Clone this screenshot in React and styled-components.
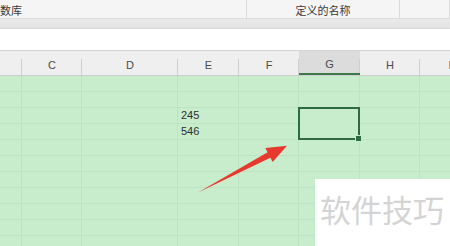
import styled, { createGlobalStyle } from "styled-components";

const GlobalStyle = createGlobalStyle`
  body {
    margin: 0;
    font-family: "Liberation Sans", "Noto Sans CJK SC", sans-serif;
  }
`;

const columns = [
  { id: "B", width: 22 },
  { id: "C", width: 60 },
  { id: "D", width: 96 },
  { id: "E", width: 61 },
  { id: "F", width: 60 },
  { id: "G", width: 61, active: true },
  { id: "H", width: 60 },
  { id: "I", width: 60 },
];

const template = columns.map((c) => `${c.width}px`).join(" ");

const values = { 2: "245", 3: "546" };

const App = () => {
  const rows = Array.from({ length: 11 }, (_, i) => i);

  return (
    <>
      <GlobalStyle />
      <Page>
        <Ribbon>
          <RibbonGroup $width={247}>
            <RibbonLabel $align="flex-start">数库</RibbonLabel>
          </RibbonGroup>
          <RibbonGroup $width={153}>
            <RibbonLabel>定义的名称</RibbonLabel>
          </RibbonGroup>
          <RibbonGroup $width={50} />
        </Ribbon>
        <Band />
        <FormulaBar />
        <HeaderRow>
          {columns.map((c) => (
            <HeaderCell key={c.id} $active={c.active}>
              {c.id === "B" ? "" : c.id}
            </HeaderCell>
          ))}
        </HeaderRow>
        <Body>
          {rows.map((r) => (
            <Row key={r}>
              {columns.map((c) => (
                <Cell key={c.id}>{c.id === "E" ? values[r] : ""}</Cell>
              ))}
            </Row>
          ))}
          <Selection>
            <FillHandle />
          </Selection>
        </Body>
        <Arrow viewBox="0 0 450 246" width="450" height="246">
          <polygon
            points="198,192.5 267.6,152.3 265.3,147.9 287,145.8 272.7,162.1 270.4,157.7"
            fill="#e8392f"
          />
        </Arrow>
        <Watermark>软件技巧</Watermark>
      </Page>
    </>
  );
};

export default App;

const Page = styled.div`
  position: relative;
  width: 450px;
  height: 246px;
  overflow: hidden;
  background: #c7edcc;
`;

const Ribbon = styled.div`
  display: flex;
  height: 19px;
  background: #f5f5f5;
  border-bottom: 1px solid #dcdcdc;
  box-sizing: border-box;
`;

const RibbonGroup = styled.div`
  width: ${({ $width }) => $width}px;
  flex-shrink: 0;
  display: flex;
  border-right: 1px solid #dadada;
  box-sizing: border-box;
`;

const RibbonLabel = styled.div`
  flex: 1;
  display: flex;
  align-items: center;
  justify-content: ${({ $align }) => $align || "center"};
  padding-top: 2px;
  font-family: "Noto Sans CJK SC", sans-serif;
  font-size: 11px;
  color: #3a3a3a;
`;

const Band = styled.div`
  height: 10px;
  background: linear-gradient(#eaeaea, #e3e3e3);
  border-bottom: 1px solid #d8d8d8;
  box-sizing: border-box;
`;

const FormulaBar = styled.div`
  height: 22px;
  background: #ffffff;
  border-bottom: 1px solid #d2d2d2;
  box-sizing: border-box;
`;

const HeaderRow = styled.div`
  display: grid;
  grid-template-columns: ${template};
  height: 25px;
  background: #efefef;
  border-bottom: 1px solid #cdcdcd;
  box-sizing: border-box;
`;

const HeaderCell = styled.div`
  position: relative;
  display: flex;
  align-items: center;
  justify-content: center;
  padding-top: 4px;
  font-size: 11px;
  color: #4a4a4a;
  box-sizing: border-box;
  background: ${({ $active }) => ($active ? "#dcdcdc" : "transparent")};
  border-bottom: ${({ $active }) => ($active ? "2px solid #3c7a4c" : "none")};

  &::after {
    content: "";
    position: absolute;
    right: 0;
    top: 8px;
    bottom: 0;
    width: 1px;
    background: #cfcfcf;
  }
`;

const Body = styled.div`
  position: relative;
`;

const Row = styled.div`
  display: grid;
  grid-template-columns: ${template};
  height: 16px;
  border-bottom: 1px solid #bee2c4;
  box-sizing: border-box;
`;

const Cell = styled.div`
  border-right: 1px solid #bfe1c5;
  box-sizing: border-box;
  padding-left: 3px;
  font-size: 11px;
  line-height: 15px;
  color: #2e2e2e;
`;

const Selection = styled.div`
  position: absolute;
  left: 298px;
  top: 31px;
  width: 62px;
  height: 33px;
  background: #c7edcc;
  border: 2px solid #2e6b3e;
  box-sizing: border-box;
`;

const FillHandle = styled.div`
  position: absolute;
  right: -4px;
  bottom: -4px;
  width: 5px;
  height: 5px;
  background: #2e6b3e;
  border: 1px solid #c7edcc;
`;

const Arrow = styled.svg`
  position: absolute;
  left: 0;
  top: 0;
  pointer-events: none;
`;

const Watermark = styled.div`
  position: absolute;
  left: 315px;
  top: 179px;
  right: 0;
  bottom: 0;
  background: #ffffff;
  padding: 12px 0 0 5px;
  font-family: "Noto Sans CJK SC", sans-serif;
  font-size: 31px;
  line-height: 36px;
  color: #d4d4d4;
  white-space: nowrap;
`;
